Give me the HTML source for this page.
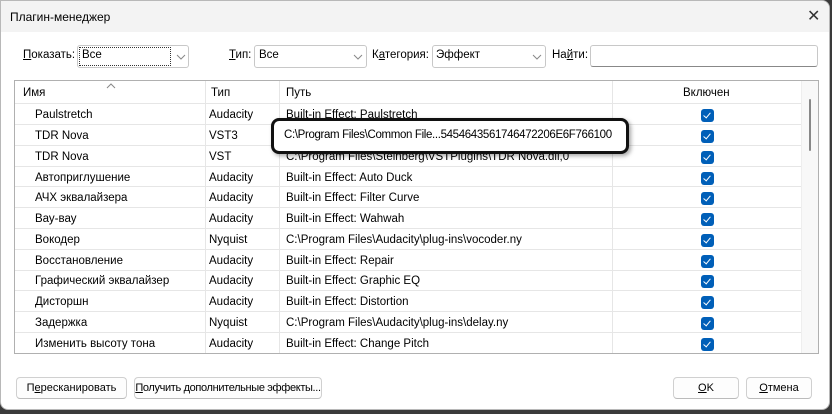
<!DOCTYPE html>
<html><head><meta charset="utf-8"><style>
*{margin:0;padding:0;box-sizing:border-box}
body{width:832px;height:414px;overflow:hidden;background:#3a3a3a;font-family:"Liberation Sans",sans-serif;font-size:11.5px;color:#000;position:relative}
.win{position:absolute;left:0;top:0;width:830px;height:410px;background:#fff;border:1px solid #b8b8b8;border-radius:0 8px 8px 8px;overflow:hidden}
.title{position:absolute;left:0;top:0;width:100%;height:31px;background:#f3f3f3}
.a{position:absolute;white-space:nowrap}
.box{position:absolute;border:1px solid #c8c8c8;background:#fff;border-radius:3px}
.chev{position:absolute;width:10px;height:6px}
.tbl{position:absolute;left:13px;top:79px;width:805px;height:274px;border:1px solid #b0b0b0;background:#fff;overflow:hidden}
.hl{position:absolute;left:0;width:786px;height:1px;background:#e6e6e6}
.vl{position:absolute;top:0;width:1px;height:274px;background:#e6e6e6}
.cb{position:absolute;left:686px;width:13px;height:13px;background:#005fb8;border-radius:3px}
.cb:after{content:"";position:absolute;left:4px;top:2px;width:3px;height:6px;border:solid #fff;border-width:0 1px 1px 0;transform:rotate(40deg)}
.btn{position:absolute;top:376px;height:22px;border:1px solid #d0d0d0;border-bottom-color:#bbb;border-radius:4px;background:#fdfdfd;text-align:center;line-height:20px;white-space:nowrap;font-size:11px}
</style></head><body>
<div class="win">
<div class="title"></div>
<div class="a" style="left:9px;top:9px;font-size:12px">Плагин-менеджер</div>
<div class="a" style="left:806px;top:5px;font-size:16px;color:#333">✕</div>

<div class="a" style="left:22px;top:48px"><u>П</u>оказать:</div>
<div class="box" style="left:76px;top:44px;width:112px;height:23px"></div>
<div class="a" style="left:78px;top:46px;width:92px;height:19px;border:1px dotted #333"></div>
<div class="a" style="left:81px;top:48px">Все</div>
<svg class="chev" style="left:175px;top:53px" viewBox="0 0 10 6"><path d="M1 1L5 5L9 1" fill="none" stroke="#888" stroke-width="1"/></svg>

<div class="a" style="left:228px;top:48px"><u>Т</u>ип:</div>
<div class="box" style="left:253px;top:44px;width:113px;height:23px"></div>
<div class="a" style="left:258px;top:48px">Все</div>
<svg class="chev" style="left:352px;top:53px" viewBox="0 0 10 6"><path d="M1 1L5 5L9 1" fill="none" stroke="#888" stroke-width="1"/></svg>

<div class="a" style="left:371px;top:48px">К<u>а</u>тегория:</div>
<div class="box" style="left:431px;top:44px;width:114px;height:23px"></div>
<div class="a" style="left:435px;top:48px">Эффект</div>
<svg class="chev" style="left:531px;top:53px" viewBox="0 0 10 6"><path d="M1 1L5 5L9 1" fill="none" stroke="#888" stroke-width="1"/></svg>

<div class="a" style="left:551px;top:48px">На<u>й</u>ти:</div>
<div class="box" style="left:589px;top:44px;width:228px;height:22px;border-bottom-color:#888"></div>

<div class="tbl">
 <svg class="chev" style="left:91px;top:2px" viewBox="0 0 10 6"><path d="M1 5L5 1L9 5" fill="none" stroke="#888" stroke-width="1"/></svg>
 <div class="a" style="left:8px;top:6px">Имя</div>
 <div class="a" style="left:196px;top:6px">Тип</div>
 <div class="a" style="left:271px;top:6px">Путь</div>
 <div class="a" style="left:668px;top:6px">Включен</div>
 <div class="vl" style="left:190px"></div>
 <div class="vl" style="left:264px"></div>
 <div class="vl" style="left:597px"></div>
 <div class="a" style="left:786px;top:0;width:19px;height:274px;background:#f8f8f8;border-left:1px solid #eee"></div>
 <div class="a" style="left:794px;top:18px;width:2px;height:52px;background:#888;border-radius:1px"></div>
 <div class="hl" style="top:22px"></div>
 <div class="hl" style="top:43px"></div><div class="hl" style="top:64px"></div><div class="hl" style="top:85px"></div>
 <div class="hl" style="top:105px"></div><div class="hl" style="top:126px"></div><div class="hl" style="top:147px"></div>
 <div class="hl" style="top:168px"></div><div class="hl" style="top:189px"></div><div class="hl" style="top:209px"></div>
 <div class="hl" style="top:230px"></div><div class="hl" style="top:251px"></div><div class="hl" style="top:272px"></div>

 <div class="a" style="left:20px;top:28px">Paulstretch</div><div class="a" style="left:194px;top:28px">Audacity</div><div class="a" style="left:271px;top:28px">Built-in Effect: Paulstretch</div><div class="cb" style="top:28px"></div>
 <div class="a" style="left:20px;top:49px">TDR Nova</div><div class="a" style="left:194px;top:49px">VST3</div><div class="cb" style="top:49px"></div>
 <div class="a" style="left:20px;top:70px">TDR Nova</div><div class="a" style="left:194px;top:70px">VST</div><div class="a" style="left:271px;top:70px">C:\Program Files\Steinberg\VSTPlugins\TDR Nova.dll,0</div><div class="cb" style="top:70px"></div>
 <div class="a" style="left:20px;top:91px">Автоприглушение</div><div class="a" style="left:194px;top:91px">Audacity</div><div class="a" style="left:271px;top:91px">Built-in Effect: Auto Duck</div><div class="cb" style="top:91px"></div>
 <div class="a" style="left:20px;top:111px">АЧХ эквалайзера</div><div class="a" style="left:194px;top:111px">Audacity</div><div class="a" style="left:271px;top:111px">Built-in Effect: Filter Curve</div><div class="cb" style="top:111px"></div>
 <div class="a" style="left:20px;top:132px">Вау-вау</div><div class="a" style="left:194px;top:132px">Audacity</div><div class="a" style="left:271px;top:132px">Built-in Effect: Wahwah</div><div class="cb" style="top:132px"></div>
 <div class="a" style="left:20px;top:153px">Вокодер</div><div class="a" style="left:194px;top:153px">Nyquist</div><div class="a" style="left:271px;top:153px">C:\Program Files\Audacity\plug-ins\vocoder.ny</div><div class="cb" style="top:153px"></div>
 <div class="a" style="left:20px;top:174px">Восстановление</div><div class="a" style="left:194px;top:174px">Audacity</div><div class="a" style="left:271px;top:174px">Built-in Effect: Repair</div><div class="cb" style="top:174px"></div>
 <div class="a" style="left:20px;top:194px">Графический эквалайзер</div><div class="a" style="left:194px;top:194px">Audacity</div><div class="a" style="left:271px;top:194px">Built-in Effect: Graphic EQ</div><div class="cb" style="top:194px"></div>
 <div class="a" style="left:20px;top:215px">Дисторшн</div><div class="a" style="left:194px;top:215px">Audacity</div><div class="a" style="left:271px;top:215px">Built-in Effect: Distortion</div><div class="cb" style="top:215px"></div>
 <div class="a" style="left:20px;top:236px">Задержка</div><div class="a" style="left:194px;top:236px">Nyquist</div><div class="a" style="left:271px;top:236px">C:\Program Files\Audacity\plug-ins\delay.ny</div><div class="cb" style="top:236px"></div>
 <div class="a" style="left:20px;top:257px">Изменить высоту тона</div><div class="a" style="left:194px;top:257px">Audacity</div><div class="a" style="left:271px;top:257px">Built-in Effect: Change Pitch</div><div class="cb" style="top:257px"></div>
</div>

<div class="a" style="left:270px;top:117px;width:358px;height:36px;border:3px solid #111;border-radius:8px;background:#fff;box-shadow:2px 2px 4px rgba(0,0,0,.35)"></div>
<div class="a" style="left:283px;top:128px;font-size:11.5px;letter-spacing:-0.35px">C:\Program Files\Common File...5454643561746472206E6F766100</div>

<div class="btn" style="left:15px;width:111px">П<u>е</u>ресканировать</div>
<div class="btn" style="left:133px;width:188px;letter-spacing:-0.35px"><u>П</u>олучить дополнительные эффекты...</div>
<div class="btn" style="left:672px;width:66px"><u>O</u>K</div>
<div class="btn" style="left:745px;width:66px"><u>О</u>тмена</div>
</div>
</body></html>
